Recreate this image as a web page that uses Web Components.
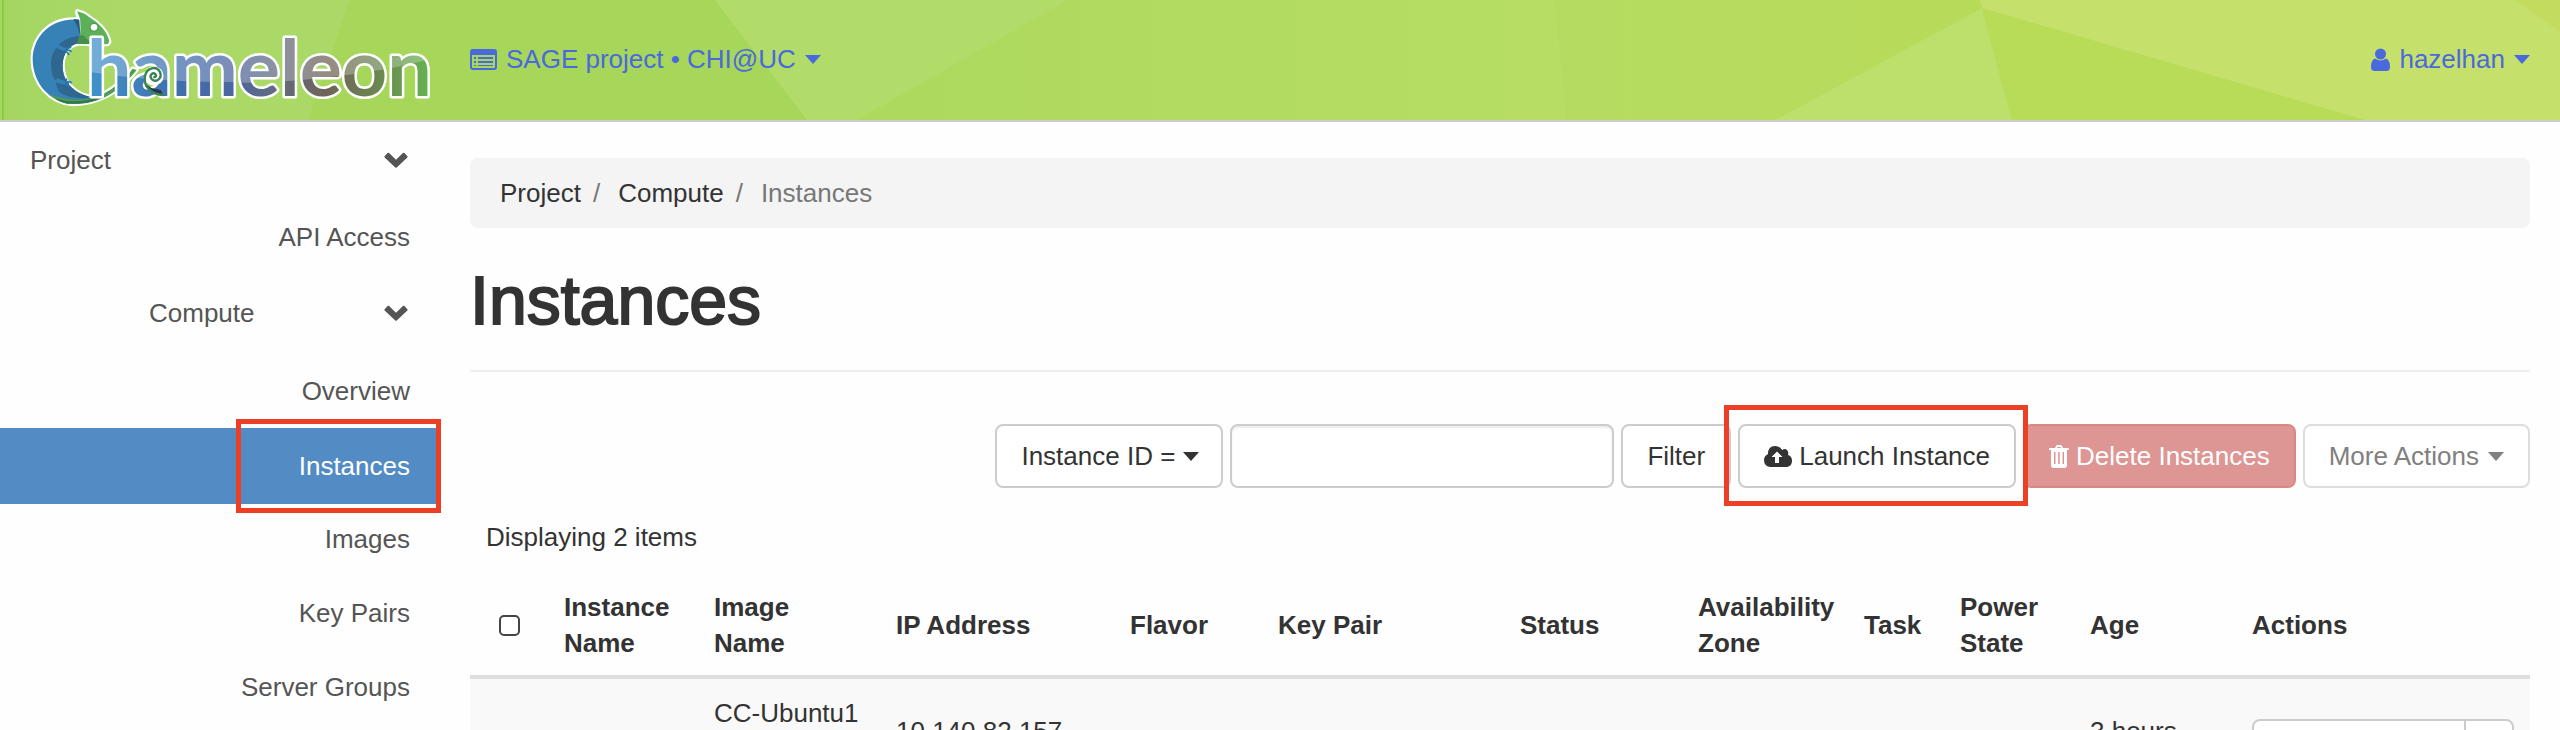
<!DOCTYPE html>
<html lang="en">
<head>
<meta charset="utf-8">
<title>Instances - Chameleon</title>
<style>
html, body { margin: 0; height: 100%; }
body { overflow: hidden; background: #fefefe; color: #333; font: 26px/36px "Liberation Sans", Arial, sans-serif; }
</style>
</head>
<body>
<dashboard-app></dashboard-app>
<script>
const define = (name, html) => {
  const template = document.createElement('template');
  template.innerHTML = html;
  customElements.define(name, class extends HTMLElement {
    constructor() {
      super();
      this.attachShadow({ mode: 'open' }).append(template.content.cloneNode(true));
    }
  });
};

define('caret-icon', `
<style>:host{display:inline-block;width:16px;height:9px;flex:none}svg{display:block;fill:currentColor}</style>
<svg width="16" height="9" viewBox="0 0 16 9" aria-hidden="true"><path d="M0 0H16L8 9Z"/></svg>`);

define('chevron-icon', `
<style>:host{display:block;flex:none}svg{display:block;fill:currentColor}</style>
<svg width="24" height="16" viewBox="0 0 24 16" aria-hidden="true"><path d="M.6 4.2 3.5 1.1Q4.3.3 5.1 1.1L12 7.8 18.900 1.100Q19.700.3 20.500 1.100L23.400 4.200Q23.900 4.900 23.400 5.500L12.700 15.500Q12 16 11.300 15.500L.6 5.500Q.1 4.900.6 4.200Z"/></svg>`);

define('chameleon-logo', `
<style>:host{display:block;width:440px}svg{display:block}text{font:700 79px Lato,sans-serif}</style>
<svg width="440" height="120" viewBox="0 0 440 120" role="img" aria-label="Chameleon">
<defs>
<linearGradient id="hue" gradientUnits="userSpaceOnUse" x1="90" y1="0" x2="428" y2="0">
<stop offset="0" stop-color="#3f93cb"/><stop offset=".25" stop-color="#416fae"/><stop offset=".42" stop-color="#4c66a0"/><stop offset=".55" stop-color="#626b80"/><stop offset=".7" stop-color="#6f6358"/><stop offset=".84" stop-color="#6c8352"/><stop offset="1" stop-color="#66b150"/>
</linearGradient>
<pattern id="gloss" patternUnits="userSpaceOnUse" width="440" height="120">
<rect width="440" height="120" fill="url(#hue)"/>
<path d="M0 0H440V56Q400 69 330 77T230 82Q150 82 90 72L0 70Z" fill="#fff" fill-opacity=".26"/>
</pattern>
</defs>
<g transform="translate(26 4) scale(.3333)">
<path d="M154 22C154 30 158 38 157 47C62 40 20 110 20 165C20 240 75 298 140 300C210 300 275 272 332 198L320 194C290 235 250 262 215 278C165 285 112 245 110 190C108 150 130 118 165 118C190 120 220 122 245 120Q252 115 248 105C238 75 215 55 190 40C180 30 165 25 154 22Z" fill="#fff" stroke="#fff" stroke-width="13" stroke-linejoin="round"/>
<path d="M158 47C62 40 20 110 20 165C20 240 75 298 140 298Q180 295 215 282C165 290 112 245 110 190C108 150 130 118 165 118Z" fill="#3681b6"/>
<path d="M163 96C105 98 75 140 75 180C75 215 90 240 100 265Q140 290 200 280C150 270 112 240 110 190C110 150 130 118 165 118Z" fill="#2f6791"/>
<path d="M142 45 160 47 163 98C159 78 153 62 142 45Z" fill="#285a80"/>
<path d="M70 270C120 292 170 290 215 278C250 262 290 235 320 194L332 198C275 272 210 302 140 300C110 300 90 290 70 270Z" fill="#4f9d50"/>
<path d="M86 283Q135 299 190 287L220 278 212 288Q170 302 125 299 102 295 86 283Z" fill="#34764f"/>
<path d="M154 22C154 30 165 40 163 60C165 85 160 105 153 120C180 118 220 122 245 120Q252 115 248 105C238 75 215 55 190 40C180 30 165 25 154 22Z" fill="#5cb057"/>
<path d="M159 96C178 86 176 108 200 115L225 121 153 120Z" fill="#46904c"/>
<circle cx="204" cy="70" r="14" fill="#4da04f"/><circle cx="204" cy="70" r="10" fill="#fff"/>
<path d="M99 107Q84 125 98 130L119 137M90 123 114 137M82 221Q76 235 92 232L118 238M91 227 116 235" fill="none" stroke="#3681b6" stroke-width="9" stroke-linejoin="round"/>
<path d="M136 130Q122 131 119 143M119 139Q133 136 136 144M119 140 130 153M122 223Q116 238 129 239M119 236Q134 229 136 238M118 237 129 250" fill="none" stroke="#2678b3" stroke-width="5"/>
</g>
<text x="87" y="96" fill="url(#gloss)" stroke="#fff" stroke-width="5" stroke-linejoin="round" paint-order="stroke">hameleon</text>
<g transform="translate(26 4) scale(.3333)" fill="none" stroke-linecap="round">
<circle cx="384" cy="216" r="29" fill="#fff"/>
<path d="M356 236Q364 270 412 274L404 258 376 252Z" fill="#26344f"/>
<path d="M411 273C375 272 352 246 357 217C361 190 392 184 402 204C410 224 389 238 377 225C368 214 380 203 389 211Q393 218 385 219" stroke="#388455" stroke-width="7"/>
</g>
</svg>`);

define('top-bar', `
<style>
:host{display:flex;position:relative;height:120px;border-bottom:2px solid #ccc;background:#aed960}
.facets{position:absolute;inset:0;width:100%;height:100%}
.logo{position:relative}
nav{position:relative;flex:1;display:flex;justify-content:space-between;align-items:center;padding:0 30px 2px}
a{display:flex;align-items:center;gap:9px;color:#4a69dc;text-decoration:none}
a svg{fill:currentColor}
</style>
<svg class="facets" viewBox="0 0 2560 120" preserveAspectRatio="none" aria-hidden="true">
<defs><linearGradient id="mid"><stop offset="0" stop-color="#acd95e"/><stop offset="1" stop-color="#b7dd64"/></linearGradient>
<linearGradient id="mid2"><stop offset="0" stop-color="#b5dc61"/><stop offset="1" stop-color="#b8da59"/></linearGradient>
<linearGradient id="left"><stop offset="0" stop-color="#a5d661"/><stop offset=".4" stop-color="#abd967"/><stop offset="1" stop-color="#abd967"/></linearGradient></defs>
<path d="M0 0H350L308 120H0Z" fill="url(#left)"/><path d="M2 0H4V120H2Z" fill="#8cc846"/>
<path d="M350 0H715L807 120H308Z" fill="#a6d65a"/>
<path d="M715 0H1068L857 120H807Z" fill="#b2dc69"/>
<path d="M1068 0H1555L1567 120H857Z" fill="url(#mid)"/>
<path d="M1555 0H1982V8L1775 120H1567Z" fill="url(#mid2)"/>
<path d="M1982 8 1775 120H2012Z" fill="#bddf6b"/>
<path d="M1982 8 2012 120H2365Z" fill="#b8db58"/>
<path d="M1980 0H2560V120H2365L1982 8Z" fill="#c5e16c"/>
<path d="M2515 0H2560V32Z" fill="#c3dc60"/>
</svg>
<chameleon-logo class="logo"></chameleon-logo>
<nav aria-label="Account">
<a href="#project"><svg width="27" height="21" viewBox="0 0 27 21" aria-hidden="true"><path fill-rule="evenodd" d="M3 0H24Q27 0 27 3V18Q27 21 24 21H3Q0 21 0 18V3Q0 0 3 0ZM2 6V18Q2 19 3 19H24Q25 19 25 18V6ZM4 8H6V10H4ZM8 8H23V10H8ZM4 12H6V14H4ZM8 12H23V14H8ZM4 16H6V17H4ZM8 16H23V17H8Z"/></svg><span>SAGE project • CHI@UC</span><caret-icon></caret-icon></a>
<a href="#user"><svg width="19" height="23" viewBox="0 0 19 23" aria-hidden="true"><circle cx="9.500" cy="6" r="5.500"/><path d="M4 10.500Q9.500 14.500 15 10.500Q19 12 19 19Q19 23 15.500 23H3.500Q0 23 0 19Q0 12 4 10.500Z"/></svg><span>hazelhan</span><caret-icon></caret-icon></a>
</nav>`);

define('side-link', `
<style>
:host{display:block}
a{display:flex;align-items:center;justify-content:flex-end;box-sizing:border-box;height:74px;padding:0 30px;color:#555;text-decoration:none;position:relative}
:host([group]) a{justify-content:space-between;height:76px;margin-bottom:2px;padding-right:32px}
:host([group=sub]) a{height:78px;padding-left:149px}
:host([active]) a{height:76px;margin-bottom:-2px;background:#538bc4;color:#fff}
:host([active]) a::after{content:"";position:absolute;box-sizing:border-box;width:205px;inset:-9px -1px -9px auto;border:5px solid #ec3f25}
chevron-icon{display:none}
:host([group]) chevron-icon{display:block}
</style>
<a href="#"><slot></slot><chevron-icon></chevron-icon></a>`);

define('side-nav', `
<style>:host{display:block}nav{display:flex;flex-direction:column}</style>
<nav aria-label="Dashboard">
<side-link group>Project</side-link>
<side-link>API Access</side-link>
<side-link group="sub">Compute</side-link>
<side-link>Overview</side-link>
<side-link active>Instances</side-link>
<side-link>Images</side-link>
<side-link>Key Pairs</side-link>
<side-link>Server Groups</side-link>
</nav>`);

define('bread-crumb', `
<style>
:host{display:block;background:#f4f4f4;border-radius:8px;padding:17px 30px}
ol{display:flex;list-style:none;margin:0;padding:0;color:#777}
a{color:#333;text-decoration:none}
li+li::before{content:"/";padding:0 18px 0 12px}
</style>
<nav aria-label="Breadcrumb"><ol><li><a href="#project">Project</a></li><li><a href="#compute">Compute</a></li><li aria-current="page">Instances</li></ol></nav>`);

define('action-button', `
<style>
:host{display:block;position:relative}
button{display:flex;align-items:center;gap:7px;box-sizing:border-box;height:64px;padding:0 24px;border:2px solid #ccc;border-radius:8px;background:#fff;color:#333;font:inherit;white-space:nowrap}
:host([danger]) button{background:#dd9693;border-color:#d98985;color:#fff}
:host([muted]) button{gap:9px;color:#808080;border-color:#ddd}
:host([marked])::after{content:"";position:absolute;z-index:1;inset:-19px -12px -18px -14px;border:5px solid #ec3f25;pointer-events:none}
</style>
<button type="button"><slot></slot></button>`);

define('instance-toolbar', `
<style>
:host{display:flex;justify-content:flex-end;gap:7px}
.field{display:grid;align-items:center}
.field>*{grid-area:1/1}
select,input{box-sizing:border-box;height:64px;border:2px solid #ccc;border-radius:8px;background:#fff;color:#333;font:inherit;margin:0}
select{appearance:none;width:228px;padding:0 24px}
.field caret-icon{justify-self:end;margin-right:24px;pointer-events:none}
input{width:384px;padding:0 24px;box-shadow:inset 0 2px 2px rgba(0,0,0,.08)}
svg{display:block;fill:currentColor;flex:none}
</style>
<div class="field"><select aria-label="Filter by"><option>Instance ID =</option></select><caret-icon></caret-icon></div>
<input type="text" aria-label="Filter value">
<action-button>Filter</action-button>
<action-button marked><svg width="28" height="21" viewBox="0 0 28 21" aria-hidden="true"><path fill-rule="evenodd" d="M6 21Q0 20 0 14Q0 10 4 8Q4 0 11 0Q16 0 18 4Q21 2 23 4Q25 6 24 9Q28 10 28 15Q28 20 23 21ZM13 5.500 7.500 11H11V17H15V11H18.500Z"/></svg>Launch Instance</action-button>
<action-button danger><svg width="20" height="23" viewBox="0 0 20 23" aria-hidden="true"><path fill-rule="evenodd" d="M6 3 7 1Q7.500 0 8.500 0H11.500Q12.500 0 13 1L14 3H19Q20 3 20 4V5H18V20Q18 23 15.500 23H4.500Q2 23 2 20V5H0V4Q0 3 1 3ZM8 3H12L11.500 2H8.500ZM5 7V19H6.500V7ZM9.200 7V19H10.800V7ZM13.500 7V19H15V7Z"/></svg>Delete Instances</action-button>
<action-button muted>More Actions<caret-icon></caret-icon></action-button>`);

define('instance-table', `
<style>
:host{display:block}
table{width:100%;table-layout:fixed;border-collapse:collapse}
caption{text-align:left;padding:0 16px 16px}
th,td{box-sizing:border-box;padding:16px;text-align:left;vertical-align:middle}
th{padding:18px 16px 14px;border-bottom:4px solid #ddd}
tbody td{background:#f9f9f9}
.check{text-align:center;padding-left:8px;padding-right:8px}
input{appearance:none;display:block;box-sizing:border-box;width:21px;height:21px;margin:0 auto;border:2px solid #444;border-radius:5px;background:#fff}
.two{min-height:72px}.three{min-height:108px}
.split{display:flex}
.split button{height:60px;box-sizing:border-box;border:2px solid #ccc;background:#fff;border-radius:8px 0 0 8px;width:214px;font:inherit}
.split button+button{width:50px;margin-left:-2px;border-radius:0 8px 8px 0}
</style>
<table>
<caption>Displaying 2 items</caption>
<colgroup><col width="78"><col width="150"><col width="182"><col width="234"><col width="148"><col width="242"><col width="178"><col width="166"><col width="96"><col width="130"><col width="162"><col width="294"></colgroup>
<thead><tr><th class="check"><input type="checkbox" aria-label="Select all"></th><th>Instance Name</th><th>Image Name</th><th>IP Address</th><th>Flavor</th><th>Key Pair</th><th>Status</th><th>Availability Zone</th><th>Task</th><th>Power State</th><th>Age</th><th>Actions</th></tr></thead>
<tbody><tr><td class="check"></td><td></td><td><div class="three">CC-Ubuntu1</div></td><td><div class="two">10.140.82.157</div></td><td></td><td></td><td></td><td></td><td></td><td></td><td><div class="two">3 hours</div></td><td><div class="split"><button type="button" aria-label="Instance action"></button><button type="button" aria-label="More instance actions"></button></div></td></tr></tbody>
</table>`);

define('dashboard-app', `
<style>
:host{display:flex;flex-direction:column;height:100vh;overflow:hidden}
top-bar{flex:none}
.body{display:grid;grid-template-columns:440px minmax(0,1fr)}
main{padding:36px 30px 0}
h1{margin:0 0 52px;padding:35px 0 33px;border-bottom:2px solid #eee;font-size:68px;line-height:74px;font-weight:400;-webkit-text-stroke:2px #333}
instance-table{margin-top:31px}
</style>
<top-bar></top-bar>
<div class="body"><side-nav></side-nav>
<main><bread-crumb></bread-crumb><h1>Instances</h1><instance-toolbar></instance-toolbar><instance-table></instance-table></main></div>`);
</script>
</body>
</html>
